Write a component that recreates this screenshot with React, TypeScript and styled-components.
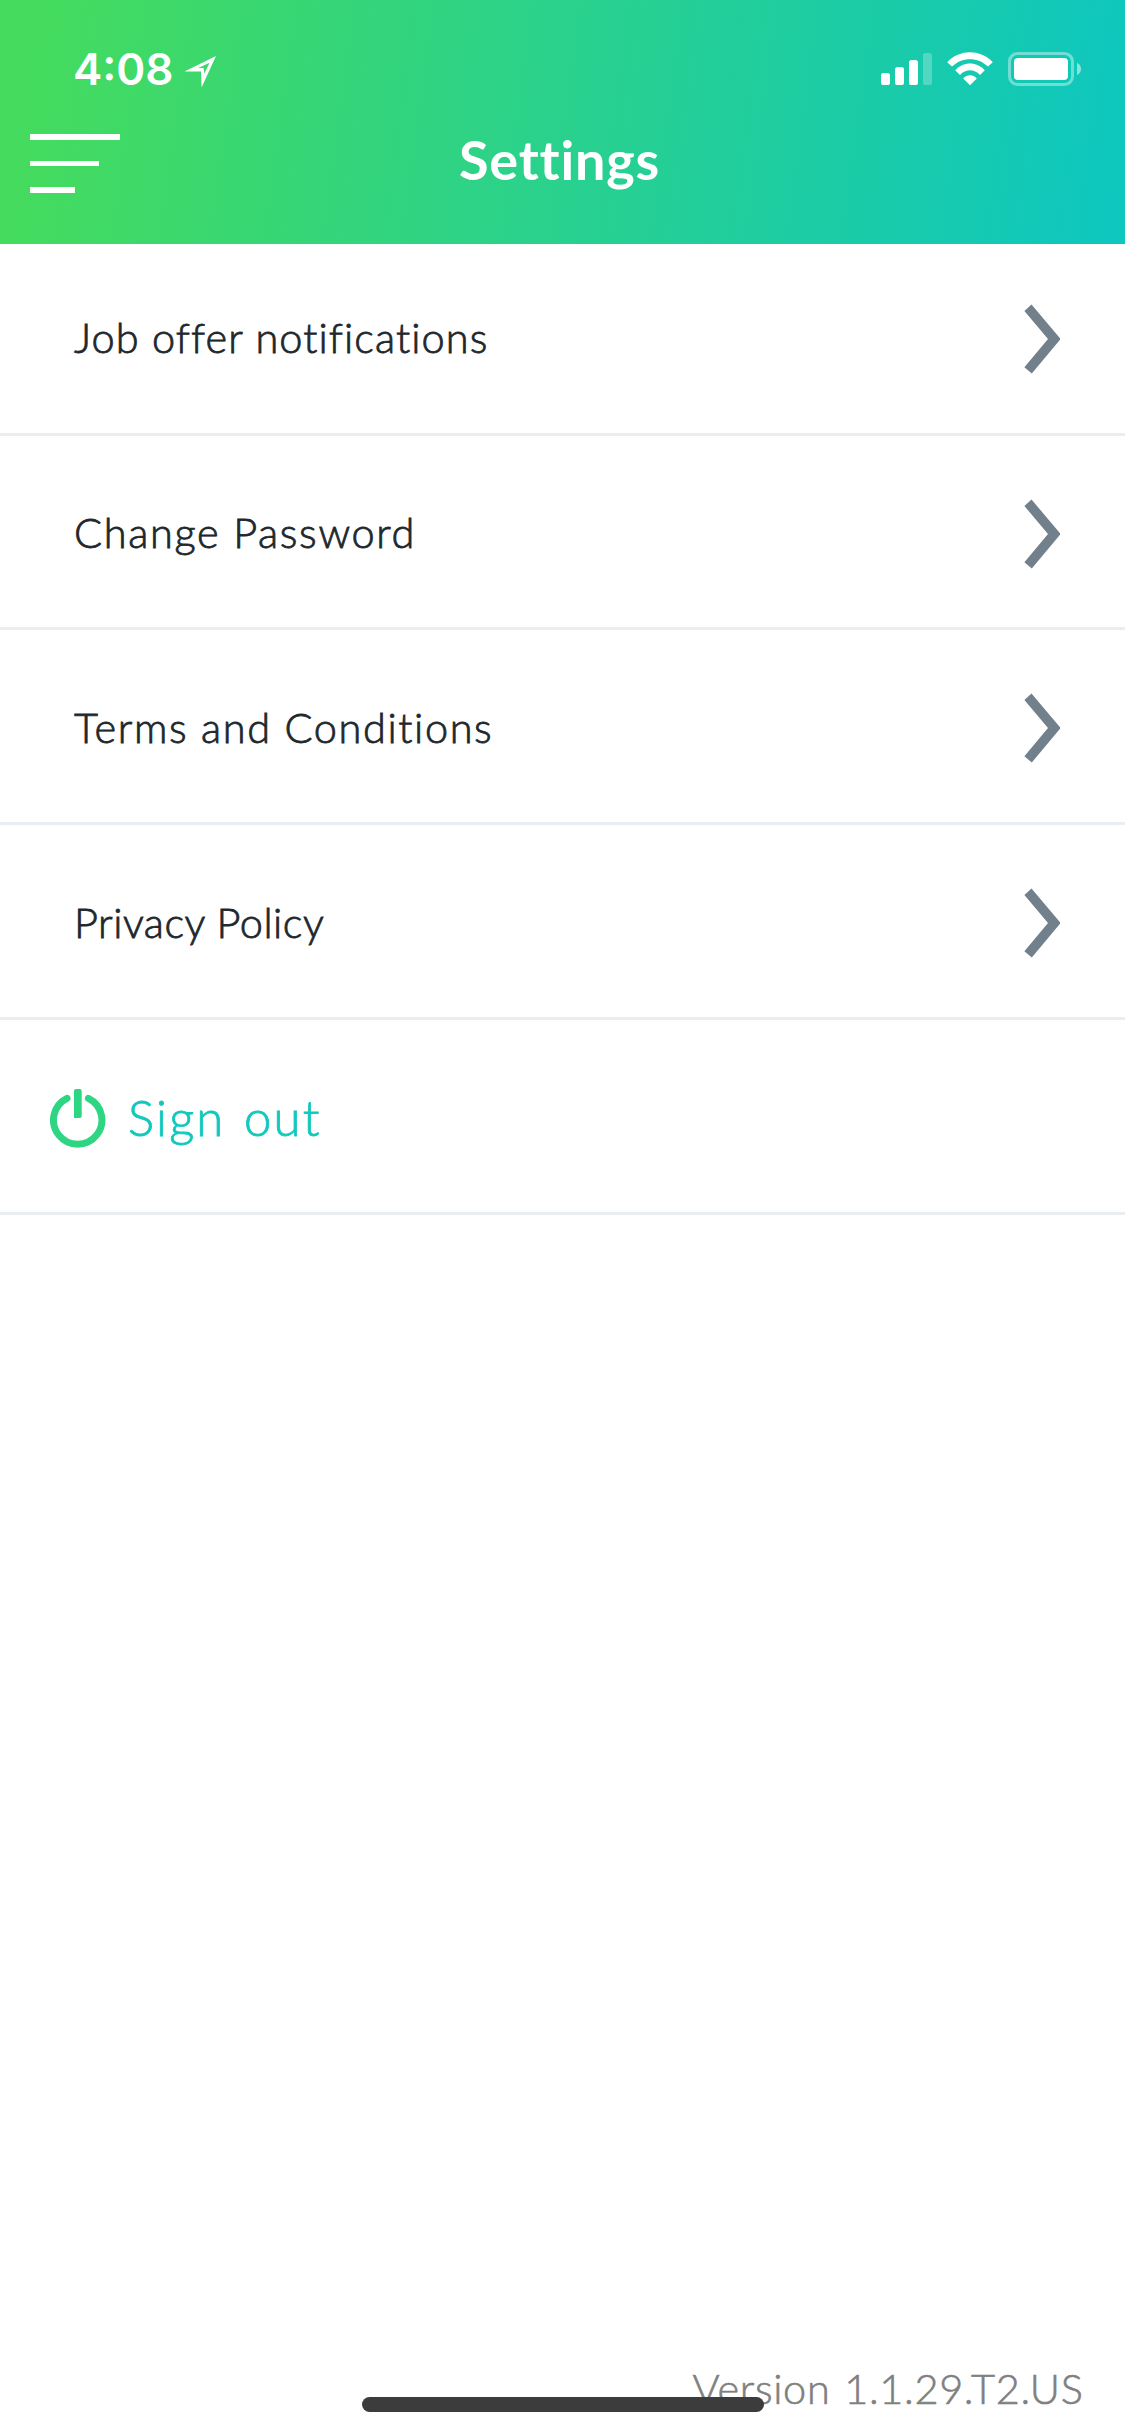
import React from "react";
import styled, { createGlobalStyle } from "styled-components";

const GlobalStyle = createGlobalStyle`
  body {
    margin: 0;
    background: #fff;
  }
  * {
    box-sizing: border-box;
  }
  svg {
    display: block;
    flex: none;
  }
`;

const Screen = styled.div`
  position: relative;
  display: flex;
  flex-direction: column;
  width: 1125px;
  height: 2436px;
  background: #fff;
  overflow: hidden;
  font-family: Lato, "Liberation Sans", sans-serif;
`;

const Header = styled.header`
  height: 244px;
  flex: none;
  color: #fff;
  background: linear-gradient(98deg, #44db5e 4%, #0ec7be 98%);
`;

const StatusBar = styled.div`
  display: flex;
  align-items: center;
  justify-content: space-between;
  height: 112px;
  padding: 26px 44px 0 73px;
`;

const TimeGroup = styled.div`
  display: flex;
  align-items: center;
  gap: 10.5px;

  svg {
    margin-top: 6px;
  }
`;

const Time = styled.span`
  font-family: Inter, "Liberation Sans", sans-serif;
  font-size: 44px;
  font-weight: 600;
  line-height: 54px;
`;

const NavBar = styled.div`
  display: grid;
  grid-template-columns: 429px auto;
  justify-content: start;
  align-items: start;
  padding: 14px 0 0 30px;
`;

const MenuButton = styled.button`
  display: flex;
  flex-direction: column;
  gap: 21px;
  padding: 0;
  margin-top: 8px;
  border: 0;
  background: none;
`;

const MenuLine = styled.span<{ $width: number }>`
  width: ${(p) => p.$width}px;
  height: 5.5px;
  background: #fff;
`;

const Title = styled.h1`
  margin: 1px 0 0;
  font-size: 54px;
  font-weight: 700;
  line-height: 65px;
  letter-spacing: 0.8px;
`;

const List = styled.ul`
  margin: 0;
  padding: 0;
  list-style: none;
`;

const Row = styled.li`
  display: flex;
  align-items: center;
  justify-content: space-between;
  height: 195px;
  padding: 4px 65px 0 74px;
  border-bottom: 3px solid #eaeef1;

  &:first-child {
    height: 192px;
    padding-top: 0;
  }
  &:nth-child(2) {
    height: 194px;
  }
`;

const SignOutRow = styled(Row)`
  justify-content: flex-start;
  gap: 22px;
  padding-left: 50px;
`;

const Label = styled.span<{ $tracking: number }>`
  padding-bottom: 3px;
  font-size: 41.5px;
  font-weight: 300;
  line-height: 50px;
  letter-spacing: ${(p) => p.$tracking}px;
  white-space: nowrap;
  color: #1e272c;
  -webkit-text-stroke: 0.8px #1e272c;
`;

const SignOutLabel = styled.span`
  padding-bottom: 3px;
  font-size: 49px;
  font-weight: 300;
  line-height: 58px;
  letter-spacing: 2.2px;
  word-spacing: 3px;
  color: #11c8bc;
  -webkit-text-stroke: 0.8px #11c8bc;
`;

const Footer = styled.footer`
  display: flex;
  justify-content: flex-end;
  margin-top: auto;
  padding: 0 41.5px 23px 0;
`;

const Version = styled.span`
  font-size: 41.5px;
  font-weight: 300;
  line-height: 50px;
  letter-spacing: 0.65px;
  word-spacing: 2px;
  color: #808080;
  -webkit-text-stroke: 0.6px #808080;
`;

const HomeIndicator = styled.div`
  position: absolute;
  left: 362px;
  bottom: 24px;
  width: 402px;
  height: 15px;
  border-radius: 7.5px;
  background: #3c3c3c;
`;

const LocationArrow = () => (
  <svg width="32" height="32" viewBox="0 0 32 32" fill="#fff" fillRule="evenodd">
    <path d="M32 0 17.6 31.6 17 15.4H0.5ZM25.6 6.8 14.2 12 19.6 12 20.3 17.6Z" />
  </svg>
);

const StatusIcons = () => (
  <svg width="200" height="34" viewBox="0 0 200 34" fill="#fff">
    <rect x="0" y="21" width="9" height="12" rx="2.6" />
    <rect x="14" y="15" width="9" height="18" rx="2.6" />
    <rect x="28" y="8" width="9" height="25" rx="2.6" />
    <rect x="42" y="1" width="9" height="32" rx="2.6" opacity="0.25" />
    <path d="M66.2 10.2C79 -3 99 -3 111.8 10.2L107 14.6C97 4.8 81 4.8 71 14.6Z" />
    <path d="M74.2 18.2C82 9.2 96 9.2 103.8 18.2L99 23C93.2 16.8 84.8 16.8 79 23Z" />
    <path d="M82.2 26.4C86 22.2 92 22.2 95.8 26.4L89 33.2Z" />
    <rect x="128.5" y="1.5" width="63" height="31" rx="8" fill="none" stroke="#fff" strokeWidth="3" opacity="0.4" />
    <rect x="133" y="6" width="54" height="22" rx="4" />
    <path d="M196 11C201.4 13 201.4 21 196 23Z" opacity="0.5" />
  </svg>
);

const Chevron = () => (
  <svg width="36" height="70" viewBox="0 0 36 70" fill="#72808b">
    <path d="M7.5 0.5 36 34.2V35.8L7.8 69.5 0.4 63.2 24 35 0.4 7Z" />
  </svg>
);

const PowerIcon = () => (
  <svg width="56" height="60" viewBox="0 0 56 60" fill="none">
    <path
      d="M17 10.3A24.2 24.2 0 1 0 38.4 10.3"
      stroke="#2ed582"
      strokeWidth="7"
      strokeLinecap="round"
    />
    <path d="M24 30V3Q24 1 26 1H29.7Q31.7 1 31.7 3V28Q31.7 30 29.7 30Z" fill="#2ed582" />
  </svg>
);

const items = [
  { label: "Job offer notifications", tracking: 1.08 },
  { label: "Change Password", tracking: 1.65 },
  { label: "Terms and Conditions", tracking: 1.6 },
  { label: "Privacy Policy", tracking: 0.5 },
];

export default function App() {
  return (
    <>
      <GlobalStyle />
      <Screen>
        <Header>
          <StatusBar>
            <TimeGroup>
              <Time>4:08</Time>
              <LocationArrow />
            </TimeGroup>
            <StatusIcons />
          </StatusBar>
          <NavBar>
            <MenuButton aria-label="Menu">
              <MenuLine $width={90} />
              <MenuLine $width={68.5} />
              <MenuLine $width={45} />
            </MenuButton>
            <Title>Settings</Title>
          </NavBar>
        </Header>
        <List>
          {items.map((item) => (
            <Row key={item.label}>
              <Label $tracking={item.tracking}>{item.label}</Label>
              <Chevron />
            </Row>
          ))}
          <SignOutRow>
            <PowerIcon />
            <SignOutLabel>Sign out</SignOutLabel>
          </SignOutRow>
        </List>
        <Footer>
          <Version>Version 1.1.29.T2.US</Version>
        </Footer>
        <HomeIndicator />
      </Screen>
    </>
  );
}
